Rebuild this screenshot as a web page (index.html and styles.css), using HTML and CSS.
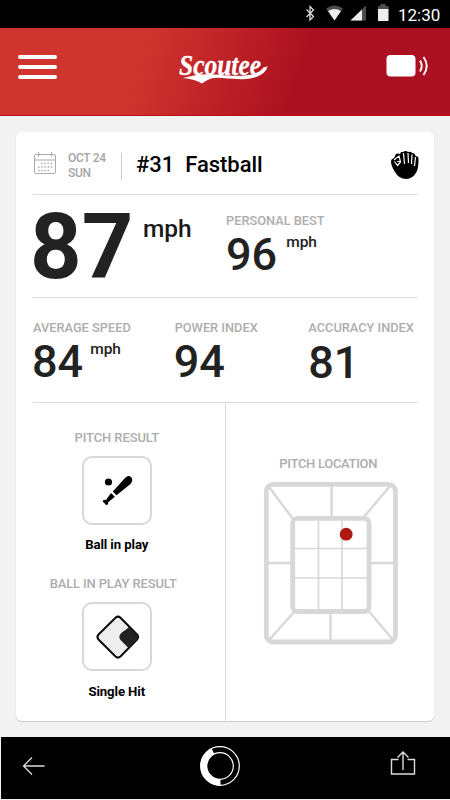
FILE: index.html
```html
<!DOCTYPE html>
<html lang="en">
<head>
<meta charset="utf-8">
<title>Scoutee</title>
<link rel="stylesheet" href="styles.css">
</head>
<body>
<div class="status">
  <svg width="100" height="28" viewBox="300 0 100 28">
    <path d="M306.5 9.500l7 7-3.500 3.500V6.500l3.500 3.500-7 7" fill="none" stroke="#ddd" stroke-width="1.300"/>
    <path d="M326 8.500Q334.500 2.500 343 8.500L334.500 20.500z" fill="#4d4d4d"/>
    <path d="M328 11Q334.500 7 341 11L334.500 20.500z" fill="#eee"/>
    <path d="M366 5.500V20.500H350.500z" fill="#4d4d4d"/>
    <path d="M362 9.500V20.500H350.500z" fill="#eee"/>
    <path d="M378 6h2.500V4h5v2h3v4H378z" fill="#4d4d4d"/>
    <path d="M378 9h10.500v12H378z" fill="#eee"/>
  </svg>
  <span class="clock">12:30</span>
</div>
<header class="header">
  <div class="menu"><i></i><i></i><i></i></div>
  <svg class="logo" width="104" height="54" viewBox="171 40 104 54">
    <text class="logo-text" x="179" y="75" textLength="82" lengthAdjust="spacingAndGlyphs">Scoutee</text>
    <path d="M183 78Q199 73 216 74.500C237 77 254 76 261 70.500Q264 67.500 267.500 66C267 72 259 78 246 79C231 80 219 76.500 211 78.500Q207 80 202 83.500Q195 79 183 78z" fill="#fff"/>
    <path d="M258 74Q262 71 265 67.500" fill="none" stroke="#fff" stroke-width="2"/>
  </svg>
  <svg class="radar" width="44" height="26" viewBox="386 53 44 26">
    <rect x="386.500" y="55" width="29" height="21.500" rx="4" fill="#fff"/>
    <path d="M420 60.500Q423.500 66 420 71.500M423.500 57Q430 66 423.500 75" fill="none" stroke="#fff" stroke-width="1.900"/>
  </svg>
</header>
<main class="card">
  <section class="row pitch">
    <svg class="calendar" width="24" height="26" viewBox="33 150 24 26">
      <g fill="none" stroke="#aaa" stroke-width="1">
        <rect x="34.500" y="154.500" width="21" height="19" rx="1.500"/>
        <path d="M34.500 160h21M38.500 152v5M51.500 152v5"/>
        <path d="M41 163.500h12M38 167h15M38 170.500h12" stroke-width="1.500" stroke-dasharray="1.500 1.700"/>
      </g>
    </svg>
    <div class="date">OCT 24<br>SUN</div>
    <div class="title"><span>#31</span><span class="kind">Fastball</span></div>
    <svg class="glove" width="30" height="30" viewBox="390 150 30 30">
      <path d="M391 161Q391 159 394 158L396 154Q398 153 400 154Q401 151 403 152Q406 150 408 152Q411 151 412 153Q415 153 415.500 156Q419 156 418.500 160Q418.500 167 417 171Q413 179 406 179Q399 179 395 172Q391 166 391 161z"/>
      <path d="M403.500 153L404.500 164M408 153L408.500 163M412 154.500L411.500 164M415.500 157L414.500 166M394 160L399 156L400.500 162L397.500 165.500L394.500 161.500M397 161.500h3.500" fill="none" stroke="#fff" stroke-width="1.200"/>
    </svg>
  </section>
  <section class="row speed">
    <div class="huge">87</div>
    <div class="unit-large">mph</div>
    <div class="stat best">
      <div class="label">PERSONAL BEST</div>
      <div class="value">96<span class="unit">mph</span></div>
    </div>
  </section>
  <section class="row averages">
    <div class="stat">
      <div class="label">AVERAGE SPEED</div>
      <div class="value">84<span class="unit">mph</span></div>
    </div>
    <div class="stat">
      <div class="label">POWER INDEX</div>
      <div class="value">94</div>
    </div>
    <div class="stat accuracy">
      <div class="label">ACCURACY INDEX</div>
      <div class="value">81</div>
    </div>
  </section>
  <section class="details">
    <div class="results">
      <div class="label pitch-result">PITCH RESULT</div>
      <div class="tile">
        <svg width="66" height="66" viewBox="84 457.500 66 66">
          <circle cx="108.500" cy="481.500" r="3.600"/>
          <path d="M112.800 491L125 477.500Q128.500 474 131 476.500Q133.800 479.500 130.500 483.500L116.500 494.800z"/>
          <path d="M111 492.500L114.800 496.300L108 502L108.300 503.500L106.500 504.800L102.500 500.800L104 499.300L106 499.500z"/>
        </svg>
      </div>
      <div class="caption">Ball in play</div>
      <div class="label play-result">BALL IN PLAY RESULT</div>
      <div class="tile">
        <svg width="66" height="66" viewBox="84 604 66 66">
          <path d="M115.500 617.800Q118 615.500 120.500 617.800L137 634.500Q139.300 637 137 639.500L120.500 656.500Q118 658.700 115.500 656.500L98.500 639.500Q96.300 637 98.500 634.500z" fill="#eee" stroke="#0a0a0a" stroke-width="2"/>
          <path d="M129 627L137 634.500Q139.300 637 137 639.500L128.500 648L120.500 640Q118.500 637.500 120 634.500Q122 631.500 125.500 630z" fill="#222"/>
        </svg>
      </div>
      <div class="caption hit">Single Hit</div>
    </div>
    <div class="location">
      <div class="label">PITCH LOCATION</div>
      <svg class="zone" width="136" height="164" viewBox="263 481 136 164">
        <g fill="none" stroke="#d8d8d8">
          <path d="M269 487L293 519M390 486L363 518M269 640L295 611M393 640L367 609M331.500 486v30M330.500 613v28M268 563h24M371 563h24" stroke-width="2.400"/>
          <path d="M318.500 519v91M342 519v91M294 548.500h75M294 578h75" stroke-width="1.600"/>
          <rect x="266.300" y="484.300" width="129.200" height="157.700" rx="7" stroke-width="4.800"/>
          <rect x="292.700" y="518.300" width="76.300" height="93.200" rx="5" stroke-width="4.800"/>
        </g>
        <circle cx="346.200" cy="534.200" r="6.400" fill="#b01911"/>
      </svg>
    </div>
  </section>
</main>
<footer class="nav">
  <svg width="24" height="22" viewBox="22 755 24 22"><path d="M44.500 766H23.500M32 757.500L23.500 766L32 774.500" fill="none" stroke="#ddd" stroke-width="1.300"/></svg>
  <svg width="42" height="42" viewBox="199 745 42 42">
    <g fill="none" stroke="#fff"><circle cx="220" cy="766" r="19.300" stroke-width="1.200"/><circle cx="220" cy="766" r="13.300" stroke-width="1.200"/>
    <path d="M220.500 782.300A16.300 16.300 0 0 1 213 751.300" stroke-width="6.500"/></g>
  </svg>
  <svg width="26" height="26" viewBox="390 750 26 26"><path d="M398.500 759.500H391.500V774H414.500V759.500H407.500M403 770V752M397.500 757.500L403 752L408.500 757.500" fill="none" stroke="#ddd" stroke-width="1.400"/></svg>
</footer>
</body>
</html>
```
FILE: styles.css
```css
* { box-sizing: border-box; }
body { margin: 0; width: 450px; height: 800px; background: #f2f2f2; font-family: Roboto, "Liberation Sans", sans-serif; color: #000; display: flex; flex-direction: column; overflow: hidden; }
svg { display: block; flex: none; }
.status { height: 28px; background: #000; color: #fff; display: flex; padding-left: 300px; }
.clock { margin-left: -2px; font-size: 17px; line-height: 30px; }
.header { height: 88px; display: flex; align-items: flex-start; background: linear-gradient(108deg, #d0342e 0%, #d0342e 32%, #ab1020 66%); border-bottom: 1px solid #b3101a; }
.menu { width: 39px; margin: 26.500px 0 0 17.500px; display: flex; flex-direction: column; gap: 6px; }
.menu i { height: 4.200px; border-radius: 3px; background: #fff; }
.logo { margin: 12px 0 0 114.500px; }
.logo-text { font: italic bold 29px "Liberation Serif", serif; fill: #fff; stroke: #fff; stroke-width: .3px; }
.radar { margin: 25px 0 0 111px; }
.card { width: 418px; height: 589px; margin: 16px 0 0 16px; background: #fff; border-radius: 6px; box-shadow: 0 1px 1px #ccc; padding: 0 16px 0 17px; display: flex; flex-direction: column; }
.row { display: flex; align-items: flex-start; border-bottom: 1.500px solid #ddd; }
.pitch { height: 62.500px; }
.calendar { margin-top: 18px; }
.date { margin: 19px 0 0 11px; width: 53px; height: 30px; font-size: 12px; line-height: 15px; font-weight: 500; color: #a5a5a5; letter-spacing: -.3px; white-space: nowrap; }
.title { border-left: 1px solid #ccc; height: 27px; margin-top: 21px; padding-left: 14px; font-size: 22px; line-height: 23px; font-weight: 500; white-space: nowrap; display: flex; }
.title .kind { margin-left: 11px; letter-spacing: -.05px; }
.glove { margin: 18px -2px 0 auto; }
.speed { height: 103.500px; }
.huge { width: 113px; margin-left: -3px; font-size: 90px; line-height: 106px; font-weight: 700; color: #222; }
.unit-large { width: 83px; margin-top: 19px; font-size: 24.500px; line-height: 30px; font-weight: 500; color: #1a1a1a; }
.label { font-size: 13px; line-height: 16px; font-weight: 500; color: #adadad; white-space: nowrap; }
.stat .label { font-size: 12.800px; line-height: 15px; }
.value { display: flex; align-items: flex-start; font-size: 45px; line-height: 44px; font-weight: 500; color: #222; }
.unit { font-size: 15.500px; line-height: 20px; margin-left: 7px; }
.best { padding-top: 18px; }
.best .value { padding-top: 5px; }
.best .unit { margin: -1px 0 0 9px; }
.averages { height: 105px; padding-top: 22px; }
.averages .stat { width: 142px; }
.averages .stat.accuracy { width: 110px; margin-left: -8px; }
.averages .value { padding-top: 5px; margin-left: -1px; }
.averages .unit { margin-top: -1px; }
.averages .accuracy .value { padding-top: 6px; margin-left: 0; }
.details { flex: 1; display: flex; }
.results { width: 192.500px; border-right: 1.500px solid #ddd; padding: 27px 24px 0 0; display: flex; flex-direction: column; align-items: center; }
.pitch-result { letter-spacing: -.1px; }
.tile { width: 70px; height: 69px; margin-top: 10px; border: 2px solid #d8d8d8; border-radius: 10px; overflow: hidden; }
.caption { margin-top: 11px; font-size: 13.200px; line-height: 18px; font-weight: 700; letter-spacing: -.1px; }
.play-result { margin: 22px 7px 0 0; letter-spacing: -.15px; }
.caption.hit { margin-top: 12px; }
.location { flex: 1; padding: 53px 0 0 13px; display: flex; flex-direction: column; align-items: center; }
.location .label { letter-spacing: -.3px; }
.zone { margin: 9px 0 0 5px; }
.nav { height: 62px; margin: 16px 0 0 1px; background: #000; display: flex; align-items: flex-start; }
.nav svg:nth-child(1) { margin: 18px 0 0 21px; }
.nav svg:nth-child(2) { margin: 8px 0 0 153px; }
.nav svg:nth-child(3) { margin: 13px 0 0 149px; }
```
